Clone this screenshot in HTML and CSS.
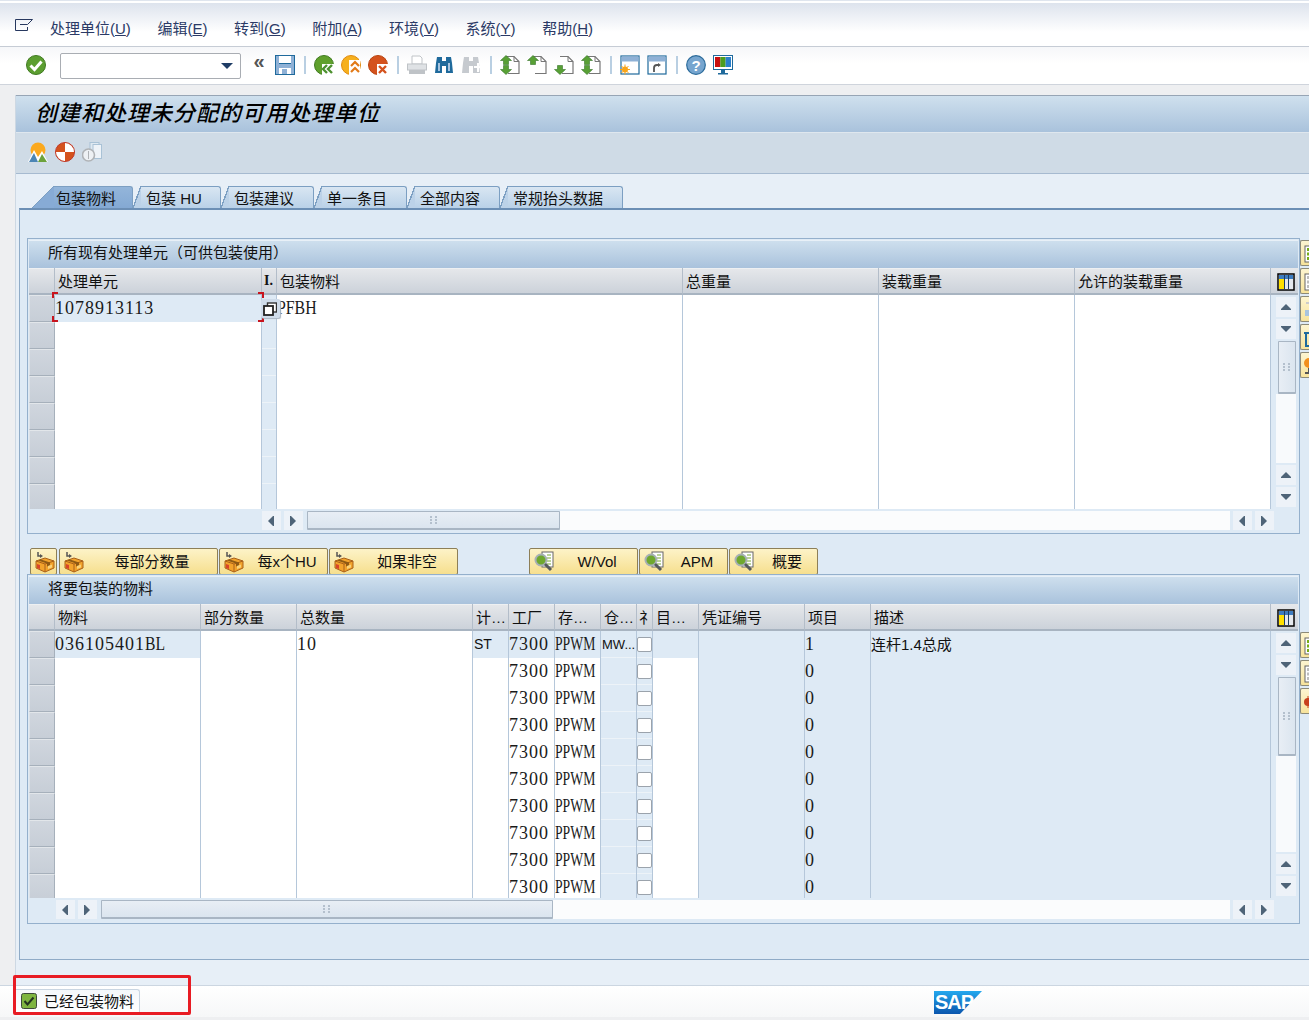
FILE: index.html
```html
<!DOCTYPE html>
<html lang="zh-CN">
<head>
<meta charset="utf-8">
<title>创建和处理未分配的可用处理单位</title>
<link rel="stylesheet" href="styles.css">
</head>
<body>
<svg class="defs" aria-hidden="true">
  <symbol id="i-pkg" viewBox="0 0 22 22">
    <path d="M4 1v4h3" fill="none" stroke="#555" stroke-width="1.5"/><path d="M6 3l3 2-3 2z" fill="#555"/>
    <path d="M2 10l9-3 9 3v7l-9 4-9-4z" fill="#f2a32c" stroke="#a9601a"/>
    <path d="M2 10l9 3 9-3M11 13v8" fill="none" stroke="#a9601a"/>
    <path d="M7 8.500l9 3v3l-3 1v-3l-9-3z" fill="#8f5a14"/>
    <path d="M3 13l3 1v4l-3-1z" fill="#d9452a"/>
    <path d="M14 15l4-1.500v3l-4 1.500z" fill="#f9d37a"/>
  </symbol>
  <symbol id="i-mag" viewBox="0 0 22 22">
    <rect x="9" y="1" width="11" height="15" fill="#fff" stroke="#666"/>
    <path d="M14 4h4M14 7h4M14 10h4M14 13h4" stroke="#79a832"/>
    <circle cx="8" cy="9" r="5.500" fill="#6fa82e" stroke="#a7b0b5" stroke-width="2"/>
    <path d="M12 13l6 6" stroke="#55595c" stroke-width="3"/>
  </symbol>
  <symbol id="i-up" viewBox="0 0 12 8"><path d="M6 1l5 5v1H1V6z" fill="#4f6478"/></symbol>
  <symbol id="i-down" viewBox="0 0 12 8"><path d="M1 1h10v1L6 7 1 2z" fill="#4f6478"/></symbol>
  <symbol id="i-left" viewBox="0 0 8 12"><path d="M6 1v10H5L0 6l5-5z" fill="#4f6478"/></symbol>
  <symbol id="i-right" viewBox="0 0 8 12"><path d="M0 1v10h1l5-5-5-5z" fill="#4f6478"/></symbol>
  <symbol id="i-grip" viewBox="0 0 8 8"><path d="M0 0h2v2H0zM5 0h2v2H5zM0 3h2v2H0zM5 3h2v2H5zM0 6h2v2H0zM5 6h2v2H5z" fill="#b4c0cd"/></symbol>
  <symbol id="i-cfg" viewBox="0 0 18 18">
    <rect x="1" y="1" width="16" height="16" fill="#fff" stroke="#000" stroke-width="1.500"/>
    <rect x="2" y="2" width="14" height="4" fill="#3d7cc0"/>
    <rect x="2" y="6" width="5" height="10" fill="#ffe000"/>
    <rect x="8" y="6" width="3" height="10" fill="#e5e9ee"/>
    <rect x="12" y="6" width="4" height="10" fill="#e5e9ee"/>
    <path d="M7.500 2v14M11.500 2v14" stroke="#1b3c66"/>
  </symbol>
  <symbol id="i-grid" viewBox="0 0 20 20"><rect x="3" y="2" width="15" height="16" fill="#fff" stroke="#666"/><path d="M5 4h4v3H5zM5 8.500h4v3H5zM5 13h4v3H5zM11 4h5v3h-5zM11 8.500h5v3h-5zM11 13h5v3h-5z" fill="#79ad18"/></symbol>
  <symbol id="i-gridg" viewBox="0 0 20 20"><rect x="3" y="2" width="15" height="16" fill="#fff" stroke="#666"/><path d="M5 4h4v3H5zM5 8.500h4v3H5zM5 13h4v3H5zM11 4h5v3h-5zM11 8.500h5v3h-5zM11 13h5v3h-5z" fill="#bdbdbd"/></symbol>
  <symbol id="i-page" viewBox="0 0 20 20"><path d="M6 1.500h8l5 5v12H8" fill="#fff" stroke="#777" stroke-width="1.200"/><path d="M14 1.500v5h5" fill="none" stroke="#777"/></symbol>
  <symbol id="i-aup" viewBox="0 0 12 10"><path d="M6 .500l5.500 5H8.500v4h-5v-4H.500z" fill="#58a035" stroke="#35752a" stroke-width=".6"/></symbol>
  <symbol id="i-adn" viewBox="0 0 12 10"><path d="M6 9.500L.500 4.500h3v-4h5v4h3z" fill="#58a035" stroke="#35752a" stroke-width=".6"/></symbol>
  <symbol id="i-win" viewBox="0 0 20 20"><rect x="1" y="1" width="18" height="18" fill="#fff" stroke="#1f6a9c" stroke-width="1.200"/><rect x="1.500" y="1.500" width="17" height="5" fill="#8fb1d6"/></symbol>
</svg>

<header class="menubar">
  <svg class="menuicon" viewBox="0 0 18 13"><path d="M.5.500h17l-5 5H5M.5.500v11h12V8" fill="none" stroke="#27385f"/></svg>
  <nav class="menus">
    <span>处理单位(<u>U</u>)</span><span>编辑(<u>E</u>)</span><span>转到(<u>G</u>)</span><span>附加(<u>A</u>)</span><span>环境(<u>V</u>)</span><span>系统(<u>Y</u>)</span><span>帮助(<u>H</u>)</span>
  </nav>
</header>

<div class="toolbar">
  <svg class="ti" viewBox="0 0 20 20"><circle cx="10" cy="10" r="9.500" fill="#5c9e30" stroke="#3f7a20"/><path d="M4.500 10.500l4 4 7-8" fill="none" stroke="#fff" stroke-width="3"/></svg>
  <div class="combo"><span class="comboarrow"></span></div>
  <span class="chev">«</span>
  <svg class="ti" viewBox="0 0 20 20"><rect x=".5" y=".5" width="19" height="19" fill="#8fb1d6" stroke="#1f6a9c"/><rect x="4" y="1" width="12" height="7" fill="#fff"/><rect x="4" y="13" width="12" height="6" fill="#fff"/><rect x="7" y="14" width="5" height="5" fill="#8fb1d6"/><path d="M4 8.500h12" stroke="#1f6a9c"/></svg>
  <i class="sep"></i>
  <svg class="ti" viewBox="0 0 20 20"><circle cx="10" cy="10" r="9.500" fill="#5fa02c" stroke="#3f7a20"/><path d="M8 9h12v11H8z" fill="#fff"/><path d="M13 10l-4 4 4 4M18 10l-4 4 4 4" fill="none" stroke="#4d9130" stroke-width="2.400"/></svg>
  <svg class="ti" viewBox="0 0 20 20"><circle cx="10" cy="10" r="9.500" fill="#f6b01e" stroke="#e08a10"/><path d="M8 5h11v15H8z" fill="#fff"/><path d="M10 11l4-4 4 4M10 17l4-4 4 4" fill="none" stroke="#e27a18" stroke-width="2.200"/></svg>
  <svg class="ti" viewBox="0 0 20 20"><circle cx="10" cy="10" r="9.500" fill="#d4521d" stroke="#b8430f"/><path d="M9 9h11v11H9z" fill="#fff"/><path d="M11 11l7 7M18 11l-7 7" stroke="#d4521d" stroke-width="2.400"/></svg>
  <i class="sep"></i>
  <svg class="ti" viewBox="0 0 20 20"><path d="M5 1h8l2 2v6H5z" fill="#fff" stroke="#c0c4c8"/><rect x=".5" y="9" width="19" height="6" fill="#dfe2e5" stroke="#bfc3c7"/><rect x="2" y="15" width="16" height="4" fill="#bfc3c7"/></svg>
  <svg class="ti" viewBox="0 0 20 20"><path d="M2 8l1-6h5v16H1zM12 2h5l1 6 1 10h-7zM8 6h4v5H8z" fill="#1f6a9c"/><path d="M4 8h2v8H4zM14 8h2v8h-2z" fill="#a6c4e0"/></svg>
  <svg class="ti" viewBox="0 0 20 20"><path d="M2 8l1-6h5v16H1zM12 2h5l1 6 1 10h-7zM8 6h4v5H8z" fill="#c6cacf"/><path d="M13 11h3V8h2v3h2v2h-2v4h-2v-4h-3z" fill="#fff"/></svg>
  <i class="sep"></i>
  <svg class="ti" viewBox="0 0 20 20"><use href="#i-page"/><use href="#i-aup" x="0" y="0" width="12" height="10"/><use href="#i-adn" x="0" y="10" width="12" height="10"/></svg>
  <svg class="ti" viewBox="0 0 20 20"><use href="#i-page"/><use href="#i-aup" x="0" y="0" width="12" height="10"/></svg>
  <svg class="ti" viewBox="0 0 20 20"><use href="#i-page"/><use href="#i-adn" x="0" y="10" width="12" height="10"/></svg>
  <svg class="ti" viewBox="0 0 20 20"><use href="#i-page"/><use href="#i-aup" x="0" y="0" width="12" height="10"/><use href="#i-adn" x="0" y="10" width="12" height="10"/></svg>
  <i class="sep"></i>
  <svg class="ti" viewBox="0 0 20 20"><use href="#i-win"/><circle cx="5" cy="14.500" r="3" fill="#f9a51a"/><path d="M5 9.500v10M0 14.500h10M1.500 11l7 7M8.500 11l-7 7" stroke="#f9a51a"/></svg>
  <svg class="ti" viewBox="0 0 20 20"><use href="#i-win"/><path d="M7 17v-4c0-2 1-3 3-3h2" fill="none" stroke="#555" stroke-width="1.800"/><path d="M11 8l3 2-3 2z" fill="#555"/></svg>
  <i class="sep"></i>
  <svg class="ti" viewBox="0 0 20 20"><circle cx="10" cy="10" r="9.300" fill="#76a5cf" stroke="#2a6a9a" stroke-width="1.200"/><text x="10" y="15.500" class="helptext">?</text></svg>
  <svg class="ti" viewBox="0 0 20 20"><rect x=".5" y=".5" width="19" height="14" fill="#fff" stroke="#1f6a9c"/><rect x="2" y="2" width="5.300" height="10" fill="#c80f0f"/><rect x="7.300" y="2" width="5.300" height="10" fill="#4d9d1e"/><rect x="12.600" y="2" width="5.400" height="10" fill="#2a7fcb"/><path d="M8 15h4v3h3v1.500H5V18h3z" fill="#1f6a9c"/></svg>
</div>

<main class="panel">
  <h1 class="title">创建和处理未分配的可用处理单位</h1>
  <div class="apptools">
    <svg class="ai" viewBox="0 0 20 20"><circle cx="10" cy="8" r="7.500" fill="#fba91e"/><path d="M0 20L6 8l4 7 4-6 6 11z" fill="#fff"/><path d="M1 20l5-9 4 9z" fill="#4c86b5"/><path d="M10 20l4-8 5 8z" fill="#6ca23c"/></svg>
    <svg class="ai" viewBox="0 0 20 20"><circle cx="10" cy="10" r="9.500" fill="#d4521d" stroke="#c0392b"/><path d="M10 1a9 9 0 0 1 9 9h-9zM10 19a9 9 0 0 1-9-9h9z" fill="#fff"/></svg>
    <svg class="ai" viewBox="0 0 20 20"><rect x="8" y="0.500" width="9" height="14" fill="#dfe9f1" stroke="#a9c2d6"/><rect x="11" y="2.500" width="8.500" height="14" fill="#eef3f8" stroke="#a9c2d6"/><circle cx="6.500" cy="13" r="6" fill="#eef1f4" stroke="#b0b3b6" stroke-width="1.600"/><path d="M6.500 9v8" stroke="#b0b3b6"/></svg>
  </div>
  <section class="content">
    <div class="tabs">
      <div class="tab on"><i class="slope"></i><span class="tablabel">包装物料</span></div>
      <div class="tab w88"><i class="slope"></i><span class="tablabel">包装 HU</span></div>
      <div class="tab w93"><i class="slope"></i><span class="tablabel">包装建议</span></div>
      <div class="tab w93"><i class="slope"></i><span class="tablabel">单一条目</span></div>
      <div class="tab w93"><i class="slope"></i><span class="tablabel">全部内容</span></div>
      <div class="tab w123"><i class="slope"></i><span class="tablabel">常规抬头数据</span></div>
    </div>
    <div class="tabbody">

      <div class="section">
        <div class="frame">
          <div class="ftitle">所有现有处理单元（可供包装使用）</div>
          <div class="hrow">
            <div class="grid g1">
              <div class="hc"></div><div class="hc">处理单元</div><div class="hc hi">I.</div><div class="hc">包装物料</div><div class="hc">总重量</div><div class="hc">装载重量</div><div class="hc">允许的装载重量</div>
            </div>
            <div class="cfg"><svg class="cfgi"><use href="#i-cfg"/></svg></div>
          </div>
          <div class="brow b1">
            <div class="grid g1">
              <div class="sel"></div><div class="b m">1078913113</div><div class="b"></div><div class="c m"><span class="nar">PFBH</span></div><div class="c"></div><div class="c"></div><div class="c"></div>
              <div class="sel"></div><div class="c"></div><div class="b r"></div><div class="c"></div><div class="c"></div><div class="c"></div><div class="c"></div>
              <div class="sel"></div><div class="c"></div><div class="b r"></div><div class="c"></div><div class="c"></div><div class="c"></div><div class="c"></div>
              <div class="sel"></div><div class="c"></div><div class="b r"></div><div class="c"></div><div class="c"></div><div class="c"></div><div class="c"></div>
              <div class="sel"></div><div class="c"></div><div class="b r"></div><div class="c"></div><div class="c"></div><div class="c"></div><div class="c"></div>
              <div class="sel"></div><div class="c"></div><div class="b r"></div><div class="c"></div><div class="c"></div><div class="c"></div><div class="c"></div>
              <div class="sel"></div><div class="c"></div><div class="b r"></div><div class="c"></div><div class="c"></div><div class="c"></div><div class="c"></div>
              <div class="sel"></div><div class="c"></div><div class="b r"></div><div class="c"></div><div class="c"></div><div class="c"></div><div class="c"></div>
            </div>
            <div class="vbar">
              <span class="sb"><svg class="av"><use href="#i-up"/></svg></span>
              <span class="sb"><svg class="av"><use href="#i-down"/></svg></span>
              <span class="vthumb th1"><svg class="grip"><use href="#i-grip"/></svg></span>
              <span class="vtrack"></span>
              <span class="sb"><svg class="av"><use href="#i-up"/></svg></span>
              <span class="sb"><svg class="av"><use href="#i-down"/></svg></span>
            </div>
            <div class="focus"></div>
            <div class="popup"><svg viewBox="0 0 14 14"><rect x="4.500" y="1" width="9" height="9" fill="#fff" stroke="#333" stroke-width="1.400"/><rect x="1" y="4" width="9" height="9" fill="#fff" stroke="#222" stroke-width="1.800"/></svg></div>
          </div>
          <div class="hbar hb1">
            <span class="sh"><svg class="ah"><use href="#i-left"/></svg></span>
            <span class="sh"><svg class="ah"><use href="#i-right"/></svg></span>
            <span class="hthumb ht1"><svg class="grip"><use href="#i-grip"/></svg></span>
            <span class="htrack"></span>
            <span class="sh"><svg class="ah"><use href="#i-left"/></svg></span>
            <span class="sh"><svg class="ah"><use href="#i-right"/></svg></span>
          </div>
        </div>
        <div class="side s1">
          <span class="sbtn"><svg><use href="#i-grid"/></svg></span>
          <span class="sbtn"><svg><use href="#i-gridg"/></svg></span>
          <span class="sbtn"><svg viewBox="0 0 20 20"><rect x="3" y="10" width="14" height="6" fill="#a9c4de"/><path d="M4 3h6" stroke="#ccc" stroke-width="2"/></svg></span>
          <span class="sbtn"><svg viewBox="0 0 20 20"><path d="M2 5h14M7 2h4v3M4 6v12h10V6" fill="none" stroke="#1f6a9c" stroke-width="2"/></svg></span>
          <span class="sbtn"><svg viewBox="0 0 20 20"><circle cx="7" cy="7" r="5" fill="#f28f1c"/><path d="M7 12v6M3 17h8" stroke="#555" stroke-width="2"/></svg></span>
        </div>
      </div>

      <div class="btnrow">
        <button class="btn w27"><svg class="bi"><use href="#i-pkg"/></svg></button>
        <button class="btn w159"><svg class="bi"><use href="#i-pkg"/></svg><span class="bl">每部分数量</span></button>
        <button class="btn w109"><svg class="bi"><use href="#i-pkg"/></svg><span class="bl">每x个HU</span></button>
        <button class="btn w129"><svg class="bi"><use href="#i-pkg"/></svg><span class="bl">如果非空</span></button>
        <button class="btn w108 far"><svg class="bi"><use href="#i-mag"/></svg><span class="bl">W/Vol</span></button>
        <button class="btn w89"><svg class="bi"><use href="#i-mag"/></svg><span class="bl">APM</span></button>
        <button class="btn w89"><svg class="bi"><use href="#i-mag"/></svg><span class="bl">概要</span></button>
      </div>

      <div class="section">
        <div class="frame">
          <div class="ftitle">将要包装的物料</div>
          <div class="hrow">
            <div class="grid g2">
              <div class="hc"></div><div class="hc">物料</div><div class="hc">部分数量</div><div class="hc">总数量</div><div class="hc">计…</div><div class="hc">工厂</div><div class="hc">存…</div><div class="hc">仓…</div><div class="hc hn">礻</div><div class="hc">目…</div><div class="hc">凭证编号</div><div class="hc">项目</div><div class="hc">描述</div>
            </div>
            <div class="cfg"><svg class="cfgi"><use href="#i-cfg"/></svg></div>
          </div>
          <div class="brow b2">
            <div class="grid g2">
              <div class="sel"></div><div class="b m">036105401<span class="nar nbl">BL</span></div><div class="c"></div><div class="c m">10</div><div class="b st">ST</div><div class="b m">7300</div><div class="b m"><span class="nw">PPWM</span></div><div class="b r mw">MW...</div><div class="b r ck"><i class="box"></i></div><div class="b"></div><div class="b"></div><div class="b m">1</div><div class="b desc">连杆1.4总成</div>
              <div class="sel"></div><div class="c"></div><div class="c"></div><div class="c"></div><div class="c"></div><div class="c m">7300</div><div class="c m"><span class="nw">PPWM</span></div><div class="b r"></div><div class="b r ck"><i class="box"></i></div><div class="c"></div><div class="b"></div><div class="b m">0</div><div class="b"></div>
              <div class="sel"></div><div class="c"></div><div class="c"></div><div class="c"></div><div class="c"></div><div class="c m">7300</div><div class="c m"><span class="nw">PPWM</span></div><div class="b r"></div><div class="b r ck"><i class="box"></i></div><div class="c"></div><div class="b"></div><div class="b m">0</div><div class="b"></div>
              <div class="sel"></div><div class="c"></div><div class="c"></div><div class="c"></div><div class="c"></div><div class="c m">7300</div><div class="c m"><span class="nw">PPWM</span></div><div class="b r"></div><div class="b r ck"><i class="box"></i></div><div class="c"></div><div class="b"></div><div class="b m">0</div><div class="b"></div>
              <div class="sel"></div><div class="c"></div><div class="c"></div><div class="c"></div><div class="c"></div><div class="c m">7300</div><div class="c m"><span class="nw">PPWM</span></div><div class="b r"></div><div class="b r ck"><i class="box"></i></div><div class="c"></div><div class="b"></div><div class="b m">0</div><div class="b"></div>
              <div class="sel"></div><div class="c"></div><div class="c"></div><div class="c"></div><div class="c"></div><div class="c m">7300</div><div class="c m"><span class="nw">PPWM</span></div><div class="b r"></div><div class="b r ck"><i class="box"></i></div><div class="c"></div><div class="b"></div><div class="b m">0</div><div class="b"></div>
              <div class="sel"></div><div class="c"></div><div class="c"></div><div class="c"></div><div class="c"></div><div class="c m">7300</div><div class="c m"><span class="nw">PPWM</span></div><div class="b r"></div><div class="b r ck"><i class="box"></i></div><div class="c"></div><div class="b"></div><div class="b m">0</div><div class="b"></div>
              <div class="sel"></div><div class="c"></div><div class="c"></div><div class="c"></div><div class="c"></div><div class="c m">7300</div><div class="c m"><span class="nw">PPWM</span></div><div class="b r"></div><div class="b r ck"><i class="box"></i></div><div class="c"></div><div class="b"></div><div class="b m">0</div><div class="b"></div>
              <div class="sel"></div><div class="c"></div><div class="c"></div><div class="c"></div><div class="c"></div><div class="c m">7300</div><div class="c m"><span class="nw">PPWM</span></div><div class="b r"></div><div class="b r ck"><i class="box"></i></div><div class="c"></div><div class="b"></div><div class="b m">0</div><div class="b"></div>
              <div class="sel"></div><div class="c"></div><div class="c"></div><div class="c"></div><div class="c"></div><div class="c m">7300</div><div class="c m"><span class="nw">PPWM</span></div><div class="b r"></div><div class="b r ck"><i class="box"></i></div><div class="c"></div><div class="b"></div><div class="b m">0</div><div class="b"></div>
            </div>
            <div class="vbar">
              <span class="sb"><svg class="av"><use href="#i-up"/></svg></span>
              <span class="sb"><svg class="av"><use href="#i-down"/></svg></span>
              <span class="vthumb th2"><svg class="grip"><use href="#i-grip"/></svg></span>
              <span class="vtrack"></span>
              <span class="sb"><svg class="av"><use href="#i-up"/></svg></span>
              <span class="sb"><svg class="av"><use href="#i-down"/></svg></span>
            </div>
          </div>
          <div class="hbar hb2">
            <span class="sh"><svg class="ah"><use href="#i-left"/></svg></span>
            <span class="sh"><svg class="ah"><use href="#i-right"/></svg></span>
            <span class="hthumb ht2"><svg class="grip"><use href="#i-grip"/></svg></span>
            <span class="htrack"></span>
            <span class="sh"><svg class="ah"><use href="#i-left"/></svg></span>
            <span class="sh"><svg class="ah"><use href="#i-right"/></svg></span>
          </div>
        </div>
        <div class="side s2">
          <span class="sbtn"><svg><use href="#i-grid"/></svg></span>
          <span class="sbtn"><svg><use href="#i-gridg"/></svg></span>
          <span class="sbtn"><svg viewBox="0 0 20 20"><circle cx="6" cy="10" r="4" fill="#c8401c"/><path d="M6 4v12" stroke="#c8401c"/></svg></span>
        </div>
      </div>

    </div>
  </section>
</main>

<footer class="status">
  <div class="stab">
    <svg class="sti" viewBox="0 0 16 16"><rect x=".5" y=".5" width="15" height="15" rx="2" fill="#7fb540" stroke="#3d4a3a"/><path d="M3.500 8l3 3.500 6-7" fill="none" stroke="#23331f" stroke-width="2"/></svg>
    <span>已经包装物料</span>
  </div>
  <svg class="saplogo" viewBox="0 0 48 23">
    <defs><linearGradient id="sapg" x1="0" y1="0" x2="0" y2="1"><stop offset="0" stop-color="#25a8ee"/><stop offset="1" stop-color="#0a55ad"/></linearGradient></defs>
    <path d="M0 0h48L26 23H0z" fill="url(#sapg)"/>
    <text x="1" y="17.500" class="saptext">SAP</text>
  </svg>
  <div class="redbox"></div>
</footer>
</body>
</html>
```

FILE: styles.css
```css
* { box-sizing: border-box; }
html, body { margin: 0; padding: 0; }
body {
  width: 1309px;
  height: 1020px;
  overflow: hidden;
  display: flex;
  flex-direction: column;
  background: #eeeff1;
  color: #111;
  font: 15px/1 "Liberation Sans", "Noto Sans CJK SC", sans-serif;
}
.defs { display: none; }

/* menu */
.menubar {
  flex: none;
  height: 47px;
  display: flex;
  align-items: center;
  padding: 10px 0 0 15px;
  border-bottom: 1px solid #c6ccd5;
  background: linear-gradient(#dfe5ee 0 1px, #fff 1px 3px, #dde3ed 3px, #fff 32px);
}
.menuicon { width: 18px; height: 13px; margin: -6px 17px 0 0; }
.menus { display: flex; gap: 26.6px; color: #2b3a66; }

/* toolbar */
.toolbar {
  flex: none;
  height: 38px;
  display: flex;
  align-items: center;
  gap: 7px;
  padding: 0 0 2px 26px;
  border-bottom: 1px solid #cfd4dc;
  background: linear-gradient(#f6f7f9, #fff 45%);
}
.ti { width: 20px; height: 20px; flex: none; }
.combo {
  width: 181px;
  height: 26px;
  margin: 3px 4px 0 7px;
  display: flex;
  align-items: center;
  justify-content: flex-end;
  padding-right: 7px;
  border: 1px solid #a9adb3;
  border-radius: 2px;
  background: #fff;
}
.comboarrow { border: 6px solid transparent; border-top: 6px solid #1f3d66; border-bottom: 0; }
.chev { width: 18px; font-size: 20px; font-weight: bold; color: #555; text-align: center; margin: -7px 0 0 -2px; }
.sep { width: 2px; height: 18px; margin: 0 1px 0 2px; background: #b9cfe2; flex: none; }
.helptext { font: bold 15px "Liberation Sans", sans-serif; fill: #fff; text-anchor: middle; }

/* panel */
.panel {
  flex: none;
  height: 890px;
  margin: 10px 0 0 15px;
  display: flex;
  flex-direction: column;
  background: #e7eff7;
  border-left: 1px solid #cdd8e3;
}
.title {
  flex: none;
  height: 38px;
  margin: 0;
  padding: 0 0 0 19px;
  display: flex;
  align-items: center;
  border-top: 1px solid #97a5b5;
  border-bottom: 1px solid #dfe7ee;
  background: linear-gradient(#cfe0ee, #a9c2dc);
  font-size: 22px;
  font-style: italic;
  font-weight: 500;
  letter-spacing: 1px;
  color: #000;
}
.apptools {
  flex: none;
  height: 41px;
  display: flex;
  align-items: center;
  gap: 7px;
  padding: 0 0 3px 12px;
  background: #cfdbe6;
  border-bottom: 1px solid #a6bad0;
}
.ai { width: 20px; height: 20px; }
.content {
  flex: 1;
  min-height: 0;
  padding-top: 12px;
  background: #e7eff7;
}

/* tabs */
.tabs { display: flex; height: 22px; margin-left: 16px; }
.tab { display: flex; flex: none; height: 22px; color: #111; }
.slope {
  width: 8px;
  flex: none;
  background: linear-gradient(to bottom right, transparent calc(50% - .7px), #7c9fc2 calc(50% - .7px), #7c9fc2 calc(50% + .7px), #bcd2e8 calc(50% + .7px));
}
.tablabel {
  flex: 1;
  display: flex;
  align-items: center;
  padding: 1px 0 0 5px;
  white-space: nowrap;
  border-top: 1px solid #7c9fc2;
  border-right: 1px solid #7c9fc2;
  border-radius: 0 3px 0 0;
  background: linear-gradient(#d9e6f2, #b9d1e8);
}
.tab.on { width: 101px; }
.tab.on .slope {
  width: 22px;
  background: linear-gradient(to bottom right, transparent calc(50% - .7px), #7c9fc2 calc(50% - .7px), #7c9fc2 calc(50% + .7px), #87abd5 calc(50% + .7px));
}
.tab.on .tablabel { padding-left: 2px; background: linear-gradient(#93b5da, #84a9d3); }
.w88 { width: 88px; }
.w93 { width: 93px; }
.w123 { width: 123px; }

.tabbody {
  width: 1290px;
  height: 752px;
  margin-left: 3px;
  padding: 28px 0 0 7px;
  overflow: hidden;
  background: #deeaf5;
  border-left: 1px solid #8fabc7;
  border-top: 2px solid #6c8fb5;
  border-bottom: 1px solid #8fabc7;
}

/* tables */
.section { display: flex; align-items: flex-start; }
.frame {
  flex: none;
  width: 1273px;
  padding: 1px;
  border: 1px solid #94b0cc;
  background: #deeaf5;
}
.ftitle {
  height: 28px;
  display: flex;
  align-items: center;
  padding: 0 0 3px 19px;
  background: linear-gradient(#cfe0ee, #a9c2dc);
  box-shadow: inset 0 1px #e8f0f7;
  color: #111;
}
.hrow, .brow { display: flex; position: relative; }
.grid { display: grid; flex: none; width: 1242px; grid-auto-rows: 27px; overflow: hidden; }
.g1 { grid-template-columns: 26px 207px 15px 406px 196px 196px 196px; }
.g2 { grid-template-columns: 26px 146px 96px 176px 36px 46px 46px 36px 16px 46px 106px 66px 400px; }
.hc {
  height: 27px;
  padding: 1px 0 0 3px;
  display: flex;
  align-items: center;
  overflow: hidden;
  white-space: nowrap;
  background: linear-gradient(#e6e8eb, #ccd2da);
  border-right: 1px solid #b3bdc9;
  border-bottom: 2px solid #a8b4c1;
  box-shadow: inset 0 1px #eef0f2;
}
.hi { padding-left: 2px; font: bold 14px "Liberation Serif", serif; }
.hn { padding-left: 2px; }
.cfg {
  flex: none;
  width: 27px;
  padding: 5px 0 0 6px;
  background: linear-gradient(#e6e8eb, #ccd2da);
  border-bottom: 2px solid #a8b4c1;
}
.cfgi { display: block; width: 18px; height: 18px; }
.b1 { height: 214px; }
.b2 { height: 267px; }
.sel {
  background: linear-gradient(#d0d6de, #c7ced7);
  border: 1px solid #a6b0bb;
  border-top-color: #e2e6ea;
  border-left-color: #dde2e7;
}
.c, .b {
  padding-left: 1px;
  line-height: 27px;
  white-space: nowrap;
  overflow: hidden;
  border-right: 1px solid #b5c7da;
}
.c { background: #fff; }
.b { background: #deeaf5; }
.desc { padding-left: 0; }
.r { box-shadow: inset 0 -1px #edf3f8; }
.m { padding-left: 0; font-family: "Liberation Serif", serif; font-size: 18px; letter-spacing: 1px; color: #1a1a1a; }
.nar { display: inline-block; width: 40px; letter-spacing: 0; transform: scaleX(.88); transform-origin: 0 50%; }
.nbl { width: 20px; transform: scaleX(.87); }
.nw { display: inline-block; width: 40px; letter-spacing: 0; transform: scaleX(.76); transform-origin: 0 50%; }
.st { font-size: 14px; }
.mw { font-size: 13px; }
.ck { display: flex; align-items: center; justify-content: center; padding: 0; }
.box {
  display: block;
  width: 15px;
  height: 15px;
  background: #fff;
  border: 1px solid #9ba3ac;
  border-radius: 2px;
}
.focus {
  position: absolute;
  left: 23px;
  top: -3px;
  width: 212px;
  height: 30px;
  background:
    linear-gradient(#c8141e,#c8141e) 0 0/6px 2px no-repeat,
    linear-gradient(#c8141e,#c8141e) 0 0/2px 6px no-repeat,
    linear-gradient(#c8141e,#c8141e) 100% 0/6px 2px no-repeat,
    linear-gradient(#c8141e,#c8141e) 100% 0/2px 6px no-repeat,
    linear-gradient(#c8141e,#c8141e) 0 100%/6px 2px no-repeat,
    linear-gradient(#c8141e,#c8141e) 0 100%/2px 6px no-repeat,
    linear-gradient(#c8141e,#c8141e) 100% 100%/6px 2px no-repeat,
    linear-gradient(#c8141e,#c8141e) 100% 100%/2px 6px no-repeat;
}
.popup {
  position: absolute;
  left: 232px;
  top: 4px;
  width: 19px;
  height: 19px;
  padding: 3px 3px 2px 2px;
  border-radius: 2px;
  background: #cfdcea;
  box-shadow: 1px 1px 1px #aab6c3;
}
.popup svg { display: block; width: 14px; height: 14px; }

/* scrollbars */
.vbar {
  flex: none;
  width: 27px;
  padding: 2px 2px 0 5px;
  display: flex;
  flex-direction: column;
  background: #deeaf5;
}
.sb {
  flex: none;
  height: 20px;
  margin-bottom: 2px;
  display: flex;
  align-items: center;
  justify-content: center;
  background: #edf2f8;
}
.av { width: 12px; height: 8px; }
.vthumb {
  flex: none;
  margin-left: 2px;
  display: flex;
  align-items: center;
  justify-content: center;
  background: linear-gradient(90deg, #e8eef5, #dbe5ef);
  border: 1px solid #a9b6c4;
  border-bottom-width: 2px;
  border-radius: 1px;
}
.th1 { height: 53px; }
.th2 { height: 79px; }
.vtrack { flex: 1; margin-bottom: 2px; background: #f8fafc; }
.grip { width: 8px; height: 8px; flex: none; }
.hbar { display: flex; gap: 3px; align-items: flex-start; padding-top: 2px; }
.hb1 { height: 23px; padding-left: 233px; }
.hb2 { height: 24px; padding-left: 27px; }
.sh {
  flex: none;
  width: 19px;
  height: 19px;
  display: flex;
  align-items: center;
  justify-content: center;
  background: #edf2f8;
}
.ah { width: 8px; height: 12px; }
.hthumb {
  flex: none;
  height: 19px;
  margin-left: 1px;
  display: flex;
  align-items: center;
  justify-content: center;
  background: linear-gradient(#e8eef5, #dbe5ef);
  border: 1px solid #a9b6c4;
  border-bottom-width: 2px;
  border-radius: 1px;
}
.ht1 { width: 253px; }
.ht2 { width: 452px; }
.htrack { flex: none; height: 19px; margin-left: -3px; background: #fbfcfd; }
.hb1 .htrack { width: 670px; }
.hb2 .htrack { width: 677px; }

/* side buttons */
.side { flex: none; width: 30px; display: flex; flex-direction: column; gap: 2px; }
.s1 { margin-top: 2px; }
.s2 { margin-top: 58px; }
.sbtn {
  height: 26px;
  padding: 3px 0 0 1px;
  background: linear-gradient(#fdf5d0, #f7e39c);
  border: 1px solid #8c8a78;
  border-right: 0;
  border-radius: 2px 0 0 2px;
}
.sbtn svg { display: block; width: 20px; height: 20px; }

/* buttons */
.btnrow { display: flex; gap: 1px; height: 26px; margin-top: 14px; padding-left: 3px; }
.btn {
  flex: none;
  height: 27px;
  margin: 0;
  padding: 0 0 0 3px;
  display: flex;
  align-items: center;
  font: inherit;
  color: #111;
  background: linear-gradient(#fdf3c8, #f6df8e);
  border: 1px solid #8d7f58;
  border-radius: 2px;
}
.bi { width: 22px; height: 22px; flex: none; }
.bl { flex: 1; text-align: center; padding: 0 0 1px 2px; white-space: nowrap; }
.w27 { width: 27px; margin-right: 1px; }
.w159 { width: 159px; }
.w109 { width: 109px; }
.w129 { width: 129px; }
.w108 { width: 109px; }
.w89 { width: 89px; }
.far { margin-left: 70px; }

/* status */
.status {
  flex: none;
  height: 32px;
  position: relative;
  padding: 3px 0 0 15px;
  display: flex;
  align-items: flex-start;
  border-top: 1px solid #ccd6e1;
  background: linear-gradient(#fff, #f6f7f8);
}
.stab {
  width: 125px;
  height: 23px;
  padding-left: 6px;
  display: flex;
  align-items: center;
  gap: 7px;
  background: linear-gradient(#f4f7fa, #fff);
  border-top: 1px solid #c9d5e1;
  border-right: 1px solid #c9d5e1;
  border-radius: 0 3px 0 0;
}
.sti { width: 16px; height: 16px; flex: none; }
.saplogo { width: 48px; height: 23px; margin: 2px 0 0 794px; flex: none; }
.saptext { font: bold 20px "Liberation Sans", sans-serif; fill: #fff; letter-spacing: -1px; }
.redbox {
  position: absolute;
  left: 13px;
  top: -11px;
  width: 178px;
  height: 40px;
  border: 3px solid #e81c24;
  border-radius: 2px;
}
```
